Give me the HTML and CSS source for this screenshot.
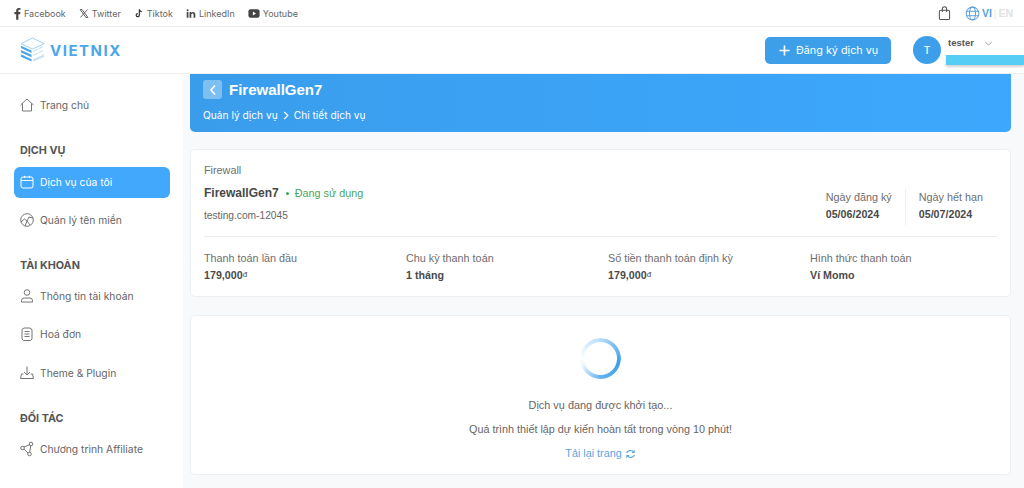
FILE: index.html
```html
<!DOCTYPE html>
<html lang="vi">
<head>
<meta charset="utf-8">
<title>FirewallGen7</title>
<link rel="stylesheet" href="styles.css">
</head>
<body>
<div class="topbar">
  <nav class="social">
    <a class="social-link"><svg class="si si-fb" viewBox="0 0 8 14"><path d="M2.500 14V7.800H.5V5.400h2V3.800C2.500 1.700 3.700.6 5.600.6c.9 0 1.600.1 1.800.1v2.100H6.200c-1 0-1.200.5-1.200 1.200v1.400h2.300l-.3 2.400H5V14z" fill="#444"/></svg>Facebook</a>
    <a class="social-link"><svg class="si" viewBox="0 0 14 14"><path d="M1.500 1.500h2.800l8.200 11h-2.800zM12 1.500 2 12.500" fill="none" stroke="#555" stroke-width="1.300"/></svg>Twitter</a>
    <a class="social-link"><svg class="si" viewBox="0 0 14 14"><path d="M7.500 1v8.300a2.200 2.200 0 1 1-2.200-2.200M7.500 1c.2 2 1.600 3.200 3.500 3.300" fill="none" stroke="#333" stroke-width="1.700"/></svg>Tiktok</a>
    <a class="social-link"><svg class="si" viewBox="0 0 14 14"><path d="M1 5h2.400v8H1zM5 5h2.300v1.100C7.800 5.300 8.700 4.800 9.900 4.800c2.200 0 3.100 1.400 3.100 3.600V13h-2.400V8.800c0-1.200-.4-1.900-1.400-1.900S7.400 7.700 7.400 8.800V13H5z" fill="#444"/><circle cx="2.200" cy="2.500" r="1.400" fill="#444"/></svg>LinkedIn</a>
    <a class="social-link"><svg class="si si-yt" viewBox="0 0 14 12"><rect x=".5" y="1" width="13" height="10" rx="2.500" fill="#444"/><path d="M5.700 3.800v4.400L9.300 6z" fill="#fff"/></svg>Youtube</a>
  </nav>
  <div class="top-right">
    <svg class="bag" viewBox="0 0 14 15"><rect x="1.500" y="4" width="11" height="10" rx="1.500" fill="none" stroke="#555" stroke-width="1.100"/><path d="M4.700 6V2.600a2.300 2.300 0 0 1 4.600 0V6" fill="none" stroke="#555" stroke-width="1.100"/></svg>
    <svg class="globe" viewBox="0 0 16 16"><g fill="none" stroke="#5b9fe0" stroke-width="1.100"><circle cx="8" cy="8" r="6.800"/><ellipse cx="8" cy="8" rx="3.200" ry="6.800"/><path d="M1.600 5.700h12.800M1.600 10.300h12.800"/></g></svg>
    <span class="lang-on">VI</span><span class="lang-sep">|</span><span class="lang-off">EN</span>
  </div>
</div>
<header class="header">
  <div class="logo">
    <svg class="logo-mark" viewBox="0 0 28 28">
      <path d="M14 1.500 26 7.500 14 13 2 7.500z" fill="none" stroke="#9cd0f5" stroke-width="1"/>
      <path d="M15 15.500 26 10M15 19.500 26 14" fill="none" stroke="#b5dcf7" stroke-width="1" stroke-dasharray="5 1"/>
      <path d="M2 9.500 13 14.500v2.500L2 12zM2 14l11 5v2.500L2 16.500zM2 18.500l11 5V26L2 21z" fill="#4aa5ea"/>
      <path d="M26 18.500 15 23.500V26l11-5z" fill="#c4e2f8"/>
    </svg>
    <span class="logo-text">VIETNIX</span>
  </div>
  <div class="header-right">
    <a class="btn-primary"><svg class="plus" viewBox="0 0 12 12"><path d="M6 .5v11M.5 6h11" stroke="#fff" stroke-width="1.800"/></svg>Đăng ký dịch vụ</a>
    <div class="user">
      <span class="avatar">T</span>
      <span class="user-name">tester</span>
      <svg class="chev" viewBox="0 0 10 6"><path d="M1 1l4 4 4-4" fill="none" stroke="#888" stroke-width=".9"/></svg>
    </div>
  </div>
  <span class="redact"></span>
</header>
<div class="layout">
  <aside class="sidebar">
    <a class="nav-item nav-home"><svg class="ni" viewBox="0 0 16 16"><path d="M1.500 8 8 2l6.500 6M3.500 6.500V14h9V6.500" fill="none" stroke="#666" stroke-width=".9"/></svg>Trang chủ</a>
    <h3 class="nav-title">DỊCH VỤ</h3>
    <a class="nav-item active"><svg class="ni" viewBox="0 0 16 16"><rect x="2" y="3" width="12" height="11" rx="2" fill="none" stroke="#fff" stroke-width="1"/><path d="M2 6.500h12M5.500 1.800V4M10.500 1.800V4" stroke="#fff" stroke-width="1"/></svg>Dịch vụ của tôi</a>
    <a class="nav-item"><svg class="ni" viewBox="0 0 16 16"><g fill="none" stroke="#666" stroke-width=".9"><circle cx="8" cy="8" r="6.300"/><path d="M2 10l3.500-3 2.500 2 2-4 4 1M6 14l2-5 3 4"/></g></svg>Quản lý tên miền</a>
    <h3 class="nav-title nav-title-gap">TÀI KHOẢN</h3>
    <a class="nav-item"><svg class="ni" viewBox="0 0 16 16"><g fill="none" stroke="#666" stroke-width=".9"><circle cx="8" cy="4.500" r="2.800"/><path d="M2.500 14v-1.500A2.500 2.500 0 0 1 5 10h6a2.500 2.500 0 0 1 2.500 2.500V14z"/></g></svg>Thông tin tài khoản</a>
    <a class="nav-item"><svg class="ni" viewBox="0 0 16 16"><g fill="none" stroke="#666" stroke-width=".9"><path d="M3 3.500 5 2h6l2 1.500V13l-1.500 1.500h-7L3 13z"/><path d="M5.500 5.500h5M5.500 8h5M5.500 10.500h5"/></g></svg>Hoá đơn</a>
    <a class="nav-item"><svg class="ni" viewBox="0 0 16 16"><g fill="none" stroke="#666" stroke-width=".9"><path d="M8 1.500v8M5 7l3 3 3-3"/><path d="M4.500 9H2.500L1.500 13.500h13L13.500 9h-2"/></g></svg>Theme &amp; Plugin</a>
    <h3 class="nav-title nav-title-gap">ĐỐI TÁC</h3>
    <a class="nav-item"><svg class="ni" viewBox="0 0 16 16"><g fill="none" stroke="#666" stroke-width=".9"><circle cx="3.500" cy="7" r="1.800"/><circle cx="12" cy="3" r="1.800"/><circle cx="10.500" cy="13" r="1.800"/><path d="M5 6 10.400 3.800M5 8.200 9 12M11.700 4.800l-1 6.400"/></g></svg>Chương trình Affiliate</a>
  </aside>
  <main class="main">
    <section class="banner">
      <div class="banner-top">
        <span class="back"><svg viewBox="0 0 8 12"><path d="M6 1.500 2 6l4 4.500" fill="none" stroke="#fff" stroke-width="1.500"/></svg></span>
        <h1 class="banner-title">FirewallGen7</h1>
      </div>
      <div class="crumbs">
        <span>Quản lý dịch vụ</span>
        <svg class="crumb-sep" viewBox="0 0 6 10"><path d="M1 1l4 4-4 4" fill="none" stroke="#fff" stroke-width="1.400"/></svg>
        <span>Chi tiết dịch vụ</span>
      </div>
    </section>
    <section class="card info">
      <div class="info-head">
        <div class="info-left">
          <div class="muted">Firewall</div>
          <div class="name-row"><strong class="svc-name">FirewallGen7</strong><span class="dot"></span><span class="status">Đang sử dụng</span></div>
          <div class="domain">testing.com-12045</div>
        </div>
        <div class="dates">
          <div class="date-col"><div class="muted">Ngày đăng ký</div><div class="val">05/06/2024</div></div>
          <div class="date-col date-col-last"><div class="muted">Ngày hết hạn</div><div class="val">05/07/2024</div></div>
        </div>
      </div>
      <div class="info-grid">
        <div><div class="muted">Thanh toán lần đầu</div><div class="val">179,000<sup>đ</sup></div></div>
        <div><div class="muted">Chu kỳ thanh toán</div><div class="val">1 tháng</div></div>
        <div><div class="muted">Số tiền thanh toán định kỳ</div><div class="val">179,000<sup>đ</sup></div></div>
        <div><div class="muted">Hình thức thanh toán</div><div class="val">Ví Momo</div></div>
      </div>
    </section>
    <section class="card loading">
      <span class="spinner"></span>
      <p class="load-line load-first">Dịch vụ đang được khởi tạo...</p>
      <p class="load-line load-second">Quá trình thiết lập dự kiến hoàn tất trong vòng 10 phút!</p>
      <a class="reload">Tải lại trang<svg class="reload-icon" viewBox="0 0 14 12"><g fill="none" stroke="#5aa5e2" stroke-width="1.500"><path d="M2 5a5 4.500 0 0 1 9-1.500M12 7a5 4.500 0 0 1-9 1.500"/></g><path d="M12.300 .5v4.200H8.100zM1.700 11.500V7.300h4.200z" fill="#5aa5e2"/></svg></a>
    </section>
  </main>
</div>
</body>
</html>
```
FILE: styles.css
```css
* { box-sizing: border-box; }
html, body { margin: 0; height: 488px; overflow: hidden; }
body { font-family: "Liberation Sans", Arial, sans-serif; font-size: 11px; color: #555; background: #fff; }
a { color: inherit; text-decoration: none; }
h1, h3, p { margin: 0; }

.topbar { height: 27px; display: flex; align-items: center; justify-content: space-between; padding: 0 11px 0 14px; border-bottom: 1px solid #ececec; }
.social { display: flex; gap: 13px; }
.social-link { display: flex; align-items: center; gap: 3px; font-size: 9px; color: #666; font-family: Inter, "Liberation Sans", sans-serif; }
.si { width: 10px; height: 13px; }
.si-fb { width: 7px; }
.si-yt { width: 12px; }
.top-right { display: flex; align-items: center; }
.bag { width: 13px; height: 15px; margin-right: 14px; }
.globe { width: 15px; height: 15px; margin-right: 2px; }
.lang-on { font-size: 10.500px; font-weight: 700; color: #5b9fe0; }
.lang-sep { font-size: 10px; color: #e8e8e8; margin: 0 2px; }
.lang-off { font-size: 10.500px; font-weight: 700; color: #e2e2e2; }

.header { position: relative; height: 47px; display: flex; align-items: center; justify-content: space-between; padding: 0 0 0 19px; border-bottom: 1px solid #eee; }
.logo { display: flex; align-items: center; gap: 4px; }
.logo-mark { width: 27px; height: 28px; }
.logo-text { font-family: Inter, "Liberation Sans", sans-serif; font-weight: 700; font-size: 15px; color: #4ba6ea; letter-spacing: 1.500px; }
.header-right { display: flex; align-items: center; }
.btn-primary { display: flex; align-items: center; gap: 6px; width: 126px; height: 27px; padding-left: 14px; border-radius: 5px; background: #3d9fea; color: #fff; font-size: 10.800px; font-family: Inter, "Liberation Sans", sans-serif; }
.plus { width: 11px; height: 11px; }
.user { position: relative; display: flex; align-items: flex-start; width: 133px; padding-left: 22px; }
.avatar { width: 28px; height: 28px; border-radius: 50%; background: #3d9fea; color: #fff; display: flex; align-items: center; justify-content: center; font-size: 10px; font-weight: 500; font-family: Inter, "Liberation Sans", sans-serif; }
.user-name { margin: 1px 0 0 7px; font-size: 9.500px; font-weight: 700; color: #555; }
.chev { width: 9px; height: 5px; margin: 5px 0 0 10px; }
.redact { position: absolute; right: 0; top: 28px; width: 78px; height: 10px; background: #55cdf5; box-shadow: 0 2px 2px rgba(0,0,0,.18); }

.layout { display: flex; height: 414px; }
.sidebar { width: 183px; flex: none; background: #fff; padding: 0 13px 0 14px; }
.nav-item { display: flex; align-items: center; gap: 5px; height: 31px; padding-left: 5px; color: #666; font-size: 10.300px; font-family: Inter, "Liberation Sans", sans-serif; border-radius: 6px; margin-bottom: 7.500px; }
.nav-home { margin-top: 15px; }
.ni { width: 16px; height: 16px; flex: none; }
.active { background: #42a8fb; color: #fff; margin-bottom: 6.500px; }
.nav-title { font-size: 10.800px; font-weight: 700; color: #555; height: 13px; line-height: 13px; margin: 23.500px 0 10px 6px; font-family: Inter, "Liberation Sans", sans-serif; }
.nav-title-gap { margin: 23.500px 0 8.500px 6px; }

.main { flex: 1; min-width: 0; background: #f7f9fb; padding: 0 13px 0 7px; display: flex; flex-direction: column; }
.banner { height: 58px; background: linear-gradient(90deg, #3a9dec, #3ca8fd); border-radius: 0 0 5px 5px; padding: 5px 13px 0; color: #fff; }
.banner-top { display: flex; align-items: center; gap: 7px; height: 21px; }
.back { width: 19px; height: 19px; border-radius: 3px; background: rgba(255,255,255,.35); display: flex; align-items: center; justify-content: center; }
.back svg { width: 8px; height: 12px; }
.banner-title { font-size: 15px; font-weight: 700; color: #fff; }
.crumbs { display: flex; align-items: center; gap: 5px; margin-top: 9px; font-size: 10.200px; font-family: Inter, "Liberation Sans", sans-serif; }
.crumb-sep { width: 6px; height: 9px; }

.card { background: #fff; border: 1px solid #edf0f2; border-radius: 5px; }
.info { height: 148px; margin-top: 17px; padding: 14px 13px 0; }
.info-head { height: 73px; display: flex; justify-content: space-between; border-bottom: 1px solid #ececec; }
.muted { color: #6e6e6e; font-size: 10.800px; line-height: 13px; }
.name-row { display: flex; align-items: center; margin-top: 9px; height: 14px; }
.svc-name { font-size: 12px; color: #484848; }
.dot { width: 3px; height: 3px; border-radius: 50%; background: #3aa655; margin: 0 6px 0 7px; }
.status { color: #4ca35c; font-size: 10.800px; }
.domain { margin-top: 9px; font-size: 10.200px; color: #666; line-height: 13px; }
.dates { display: flex; align-items: flex-start; margin-top: 25px; }
.date-col { height: 36px; padding: 2px 13px 0 0; }
.date-col-last { border-left: 1px solid #eee; padding: 2px 14px 0 13px; }
.val { font-weight: 700; color: #4a4a4a; font-size: 10.700px; line-height: 13px; margin-top: 4px; }
.val sup { font-size: 8px; font-weight: 400; line-height: 0; vertical-align: 2px; }
.info-grid { display: grid; grid-template-columns: repeat(3, 202px) 1fr; padding-top: 15px; }

.loading { height: 160px; margin-top: 18px; display: flex; flex-direction: column; align-items: center; padding-top: 22px; }
.spinner { width: 41px; height: 41px; border-radius: 50%; background: conic-gradient(from 270deg, rgba(61,159,234,0) 0deg, #b5dbf8 90deg, #3d9fea 190deg, #62b2ef 270deg, rgba(61,159,234,.1) 340deg, rgba(61,159,234,0) 360deg); -webkit-mask: radial-gradient(closest-side, transparent 16px, #000 17px); mask: radial-gradient(closest-side, transparent 16px, #000 17px); }
.load-line { font-size: 10.900px; color: #666; line-height: 13px; }
.load-first { margin-top: 20px; }
.load-second { margin-top: 11px; font-size: 10.800px; }
.reload { display: flex; align-items: center; gap: 3px; margin-top: 11px; color: #5aa5e2; font-size: 10.800px; line-height: 13px; }
.reload-icon { width: 11px; height: 10px; }
```
